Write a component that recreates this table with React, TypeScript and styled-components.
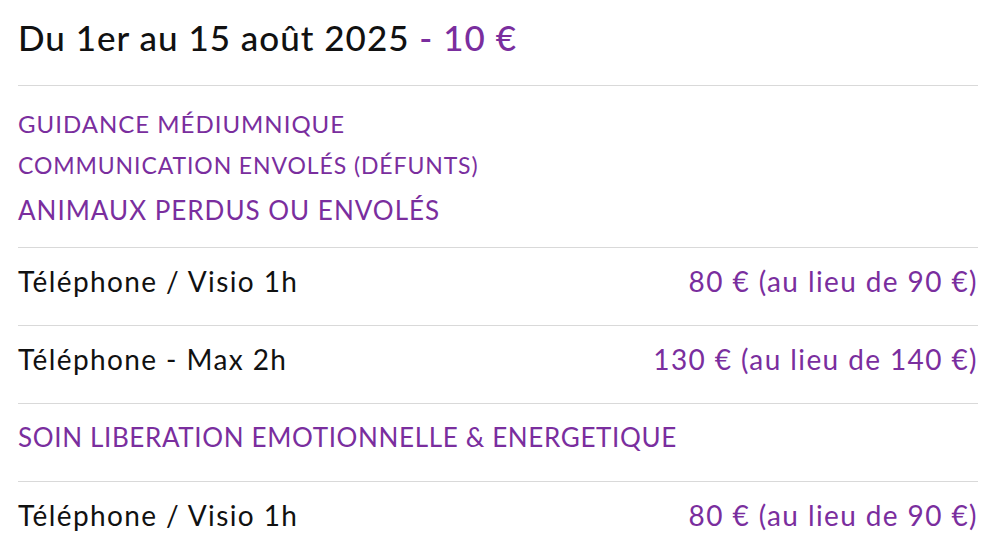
import * as React from 'react';
import styled, { createGlobalStyle } from 'styled-components';

const GlobalStyle = createGlobalStyle`
  body {
    margin: 0;
    background: #fff;
    font-family: Lato, "Noto Sans", sans-serif;
  }
`;

const PURPLE = '#7a2e9e';

const Wrapper = styled.div`
  width: 960px;
  margin-left: 18px;
`;

const Title = styled.h2`
  margin: 0;
  height: 85px;
  display: flex;
  align-items: center;
  padding-bottom: 12px;
  box-sizing: border-box;
  font-size: 35px;
  font-weight: 500;
  letter-spacing: 1px;
  color: #111;
`;

const Accent = styled.span`
  color: ${PURPLE};
`;

const Block = styled.div`
  border-top: 1px solid #d9d9d9;
`;

const Headings = styled(Block)`
  display: flex;
  flex-direction: column;
  padding: 23px 0 22px;
  gap: 11px;
`;

const Heading = styled.div<{ size: number; spacing: number; push?: number }>`
  color: ${PURPLE};
  font-size: ${(p) => p.size}px;
  letter-spacing: ${(p) => p.spacing}px;
  margin-top: ${(p) => p.push || 0}px;
  line-height: 30px;
  text-transform: uppercase;
`;

const Row = styled(Block)`
  height: 78px;
  display: flex;
  align-items: center;
  justify-content: space-between;
  padding-bottom: 11px;
  box-sizing: border-box;
  font-size: 28px;
  letter-spacing: 1.4px;
`;

const Label = styled.span`
  color: #111;
`;

const Price = styled.span`
  color: ${PURPLE};
`;

const SectionTitle = styled(Row)`
  color: ${PURPLE};
  font-size: 26px;
  letter-spacing: 0.65px;
  text-transform: uppercase;
`;

interface Offer {
  label: string
  price: string
}

const offers1: Offer[] = [
  { label: 'Téléphone / Visio 1h', price: '80 € (au lieu de 90 €)' },
  { label: 'Téléphone - Max 2h', price: '130 € (au lieu de 140 €)' },
];

const offers2: Offer[] = [
  { label: 'Téléphone / Visio 1h', price: '80 € (au lieu de 90 €)' },
];

const App = () => {
  return <Wrapper>
    <GlobalStyle />
    <Title>Du 1er au 15 août 2025&nbsp;<Accent>- 10 €</Accent></Title>
    <Headings>
      <Heading size={24} spacing={1}>Guidance médiumnique</Heading>
      <Heading size={23} spacing={0.9}>Communication envolés (défunts)</Heading>
      <Heading size={26} spacing={1} push={4}>Animaux perdus ou envolés</Heading>
    </Headings>
    {offers1.map((o, i) => (
      <Row key={i}>
        <Label>{o.label}</Label>
        <Price>{o.price}</Price>
      </Row>
    ))}
    <SectionTitle>Soin liberation emotionnelle &amp; energetique</SectionTitle>
    {offers2.map((o, i) => (
      <Row key={i}>
        <Label>{o.label}</Label>
        <Price>{o.price}</Price>
      </Row>
    ))}
  </Wrapper>
}

export default App;
